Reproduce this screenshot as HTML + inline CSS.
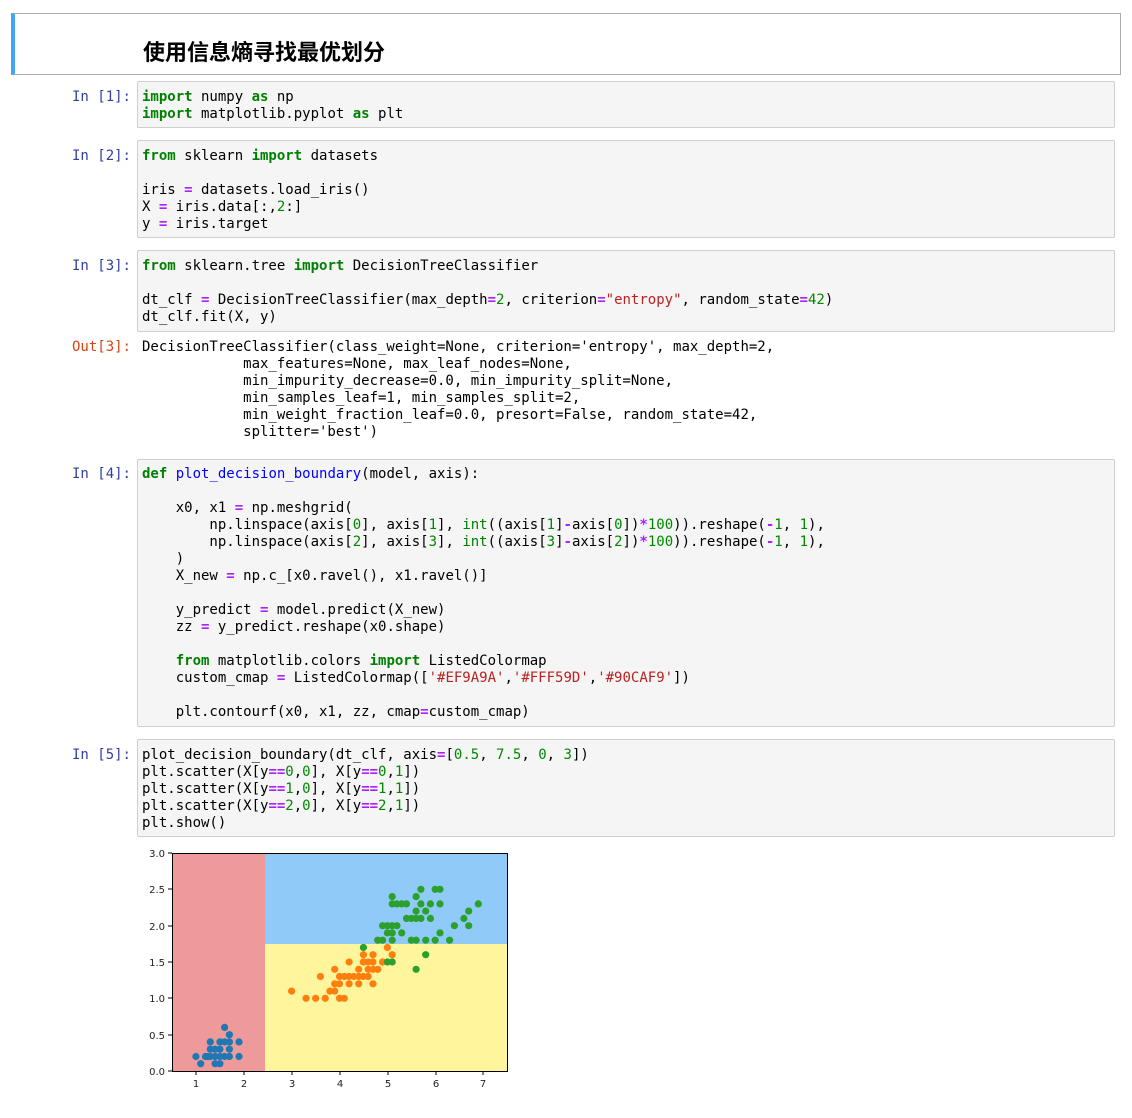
<!DOCTYPE html>
<html><head><meta charset="utf-8"><style>
body{margin:0;background:#fff;width:1132px;height:1118px;position:relative;overflow:hidden;font-family:"DejaVu Sans Mono","Liberation Mono",monospace;font-size:14px;}
.hdr{position:absolute;left:11px;top:13px;width:1110px;height:62px;border:1px solid #ababab;border-left:4px solid #42A5F5;box-sizing:border-box;}
.hdr h2{position:absolute;left:128px;top:21px;margin:0;font:bold 22px "Liberation Sans","Noto Sans CJK SC",sans-serif;color:#000;}
.p{position:absolute;right:1001px;color:#303F9F;white-space:pre;line-height:17px;}
.o{color:#D84315;}
.box{position:absolute;left:137px;width:978px;background:#f5f5f5;border:1px solid #cfcfcf;border-radius:2px;box-sizing:border-box;}
pre{margin:0;position:absolute;left:142px;font:14px "DejaVu Sans Mono",monospace;line-height:17px;color:#000;}
.k{color:#008000;font-weight:bold}.e{color:#AA22FF;font-weight:bold}.n{color:#008800}.s{color:#BA2121}.f{color:#0000FF}.b{color:#008000}
svg text{font:10px "DejaVu Sans",sans-serif;fill:#222}
</style></head><body>
<div class="hdr"><h2>使用信息熵寻找最优划分</h2></div>

<div class="p" style="top:89px">In [1]:</div>
<div class="box" style="top:81px;height:47px"></div>
<pre style="top:89px"><span class="k">import</span> numpy <span class="k">as</span> np
<span class="k">import</span> matplotlib.pyplot <span class="k">as</span> plt</pre>

<div class="p" style="top:148px">In [2]:</div>
<div class="box" style="top:140px;height:98px"></div>
<pre style="top:148px"><span class="k">from</span> sklearn <span class="k">import</span> datasets

iris <span class="e">=</span> datasets.load_iris()
X <span class="e">=</span> iris.data[:,<span class="n">2</span>:]
y <span class="e">=</span> iris.target</pre>

<div class="p" style="top:258px">In [3]:</div>
<div class="box" style="top:250px;height:82px"></div>
<pre style="top:258px"><span class="k">from</span> sklearn.tree <span class="k">import</span> DecisionTreeClassifier

dt_clf <span class="e">=</span> DecisionTreeClassifier(max_depth<span class="e">=</span><span class="n">2</span>, criterion<span class="e">=</span><span class="s">"entropy"</span>, random_state<span class="e">=</span><span class="n">42</span>)
dt_clf.fit(X, y)</pre>

<div class="p o" style="top:339px">Out[3]:</div>
<pre style="top:339px">DecisionTreeClassifier(class_weight=None, criterion='entropy', max_depth=2,
            max_features=None, max_leaf_nodes=None,
            min_impurity_decrease=0.0, min_impurity_split=None,
            min_samples_leaf=1, min_samples_split=2,
            min_weight_fraction_leaf=0.0, presort=False, random_state=42,
            splitter='best')</pre>

<div class="p" style="top:466px">In [4]:</div>
<div class="box" style="top:459px;height:268px"></div>
<pre style="top:466px"><span class="k">def</span> <span class="f">plot_decision_boundary</span>(model, axis):

    x0, x1 <span class="e">=</span> np.meshgrid(
        np.linspace(axis[<span class="n">0</span>], axis[<span class="n">1</span>], <span class="b">int</span>((axis[<span class="n">1</span>]<span class="e">-</span>axis[<span class="n">0</span>])<span class="e">*</span><span class="n">100</span>)).reshape(<span class="e">-</span><span class="n">1</span>, <span class="n">1</span>),
        np.linspace(axis[<span class="n">2</span>], axis[<span class="n">3</span>], <span class="b">int</span>((axis[<span class="n">3</span>]<span class="e">-</span>axis[<span class="n">2</span>])<span class="e">*</span><span class="n">100</span>)).reshape(<span class="e">-</span><span class="n">1</span>, <span class="n">1</span>),
    )
    X_new <span class="e">=</span> np.c_[x0.ravel(), x1.ravel()]

    y_predict <span class="e">=</span> model.predict(X_new)
    zz <span class="e">=</span> y_predict.reshape(x0.shape)

    <span class="k">from</span> matplotlib.colors <span class="k">import</span> ListedColormap
    custom_cmap <span class="e">=</span> ListedColormap([<span class="s">'#EF9A9A'</span>,<span class="s">'#FFF59D'</span>,<span class="s">'#90CAF9'</span>])

    plt.contourf(x0, x1, zz, cmap<span class="e">=</span>custom_cmap)</pre>

<div class="p" style="top:747px">In [5]:</div>
<div class="box" style="top:739px;height:98px"></div>
<pre style="top:747px">plot_decision_boundary(dt_clf, axis<span class="e">=</span>[<span class="n">0.5</span>, <span class="n">7.5</span>, <span class="n">0</span>, <span class="n">3</span>])
plt.scatter(X[y<span class="e">==</span><span class="n">0</span>,<span class="n">0</span>], X[y<span class="e">==</span><span class="n">0</span>,<span class="n">1</span>])
plt.scatter(X[y<span class="e">==</span><span class="n">1</span>,<span class="n">0</span>], X[y<span class="e">==</span><span class="n">1</span>,<span class="n">1</span>])
plt.scatter(X[y<span class="e">==</span><span class="n">2</span>,<span class="n">0</span>], X[y<span class="e">==</span><span class="n">2</span>,<span class="n">1</span>])
plt.show()</pre>

<svg id="pl" style="position:absolute;left:0;top:0" width="1132" height="1118">
<rect x="172" y="853" width="93" height="218" fill="#EF9A9A"/>
<rect x="265" y="853" width="242" height="91" fill="#90CAF9"/>
<rect x="265" y="944" width="242" height="127" fill="#FFF59D"/>
<g id="pts"></g>
<rect x="172.5" y="853.5" width="335" height="218" fill="none" stroke="#000" stroke-width="1"/>
<g stroke="#000">
<line x1="196" y1="1071" x2="196" y2="1075"/><line x1="244" y1="1071" x2="244" y2="1075"/><line x1="292" y1="1071" x2="292" y2="1075"/><line x1="340" y1="1071" x2="340" y2="1075"/><line x1="388" y1="1071" x2="388" y2="1075"/><line x1="436" y1="1071" x2="436" y2="1075"/><line x1="483" y1="1071" x2="483" y2="1075"/>
<line x1="168" y1="1071" x2="172" y2="1071"/><line x1="168" y1="1035" x2="172" y2="1035"/><line x1="168" y1="998" x2="172" y2="998"/><line x1="168" y1="962" x2="172" y2="962"/><line x1="168" y1="926" x2="172" y2="926"/><line x1="168" y1="889" x2="172" y2="889"/><line x1="168" y1="853" x2="172" y2="853"/>
</g>
<g text-anchor="middle"><text x="196" y="1087">1</text><text x="244" y="1087">2</text><text x="292" y="1087">3</text><text x="340" y="1087">4</text><text x="388" y="1087">5</text><text x="436" y="1087">6</text><text x="483" y="1087">7</text></g>
<g text-anchor="end"><text x="165" y="1075">0.0</text><text x="165" y="1039">0.5</text><text x="165" y="1002">1.0</text><text x="165" y="966">1.5</text><text x="165" y="930">2.0</text><text x="165" y="893">2.5</text><text x="165" y="857">3.0</text></g>
</svg>
<script>
var S=[[1,.2],[1.1,.1],[1.2,.2],[1.3,.2],[1.3,.3],[1.3,.4],[1.4,.2],[1.4,.1],[1.4,.3],[1.5,.2],[1.5,.4],[1.5,.1],[1.5,.3],[1.6,.2],[1.6,.4],[1.6,.6],[1.7,.2],[1.7,.3],[1.7,.4],[1.7,.5],[1.9,.2],[1.9,.4],[1.25,.2]];
var V=[[3,1.1],[3.3,1],[3.5,1],[3.6,1.3],[3.7,1],[3.8,1.1],[3.9,1.1],[3.9,1.2],[3.9,1.4],[4,1],[4,1.2],[4,1.3],[4.1,1],[4.1,1.3],[4.2,1.2],[4.2,1.3],[4.2,1.5],[4.3,1.3],[4.4,1.2],[4.4,1.3],[4.4,1.4],[4.5,1.3],[4.5,1.5],[4.5,1.6],[4.6,1.3],[4.6,1.4],[4.6,1.5],[4.7,1.2],[4.7,1.4],[4.7,1.5],[4.7,1.6],[4.8,1.4],[4.8,1.8],[4.9,1.5],[5,1.7],[5.1,1.6],[4.5,1.5],[4.9,1.5]];
var G=[[4.5,1.7],[4.8,1.8],[4.9,1.8],[5,1.5],[5.1,1.5],[5,1.9],[4.9,2],[5,2],[5.1,2],[5.2,2],[5.1,1.9],[5.1,1.8],[5.3,1.9],[5.1,2.3],[5.1,2.4],[5.2,2.3],[5.3,2.3],[5.4,2.3],[5.4,2.1],[5.5,2.1],[5.6,2.1],[5.7,2.1],[5.9,2.1],[5.6,2.2],[5.8,2.2],[5.6,2.4],[5.7,2.5],[5.7,2.3],[5.9,2.3],[6,2.5],[6.1,2.5],[6.1,2.3],[5.5,1.8],[5.6,1.8],[5.8,1.8],[6,1.8],[6.3,1.8],[6.1,1.9],[6.4,2],[6.6,2.1],[6.7,2.2],[6.7,2],[6.9,2.3],[5.6,1.4],[5.8,1.6]];
var h='';function add(a,c){a.forEach(function(p){h+='<circle cx="'+(172+(p[0]-0.5)*47.86).toFixed(1)+'" cy="'+(1071-p[1]*72.67).toFixed(1)+'" r="3.6" fill="'+c+'"/>';});}
add(S,'#1f77b4');add(V,'#ff7f0e');add(G,'#2ca02c');
document.getElementById('pts').innerHTML=h;
</script>
</body></html>
